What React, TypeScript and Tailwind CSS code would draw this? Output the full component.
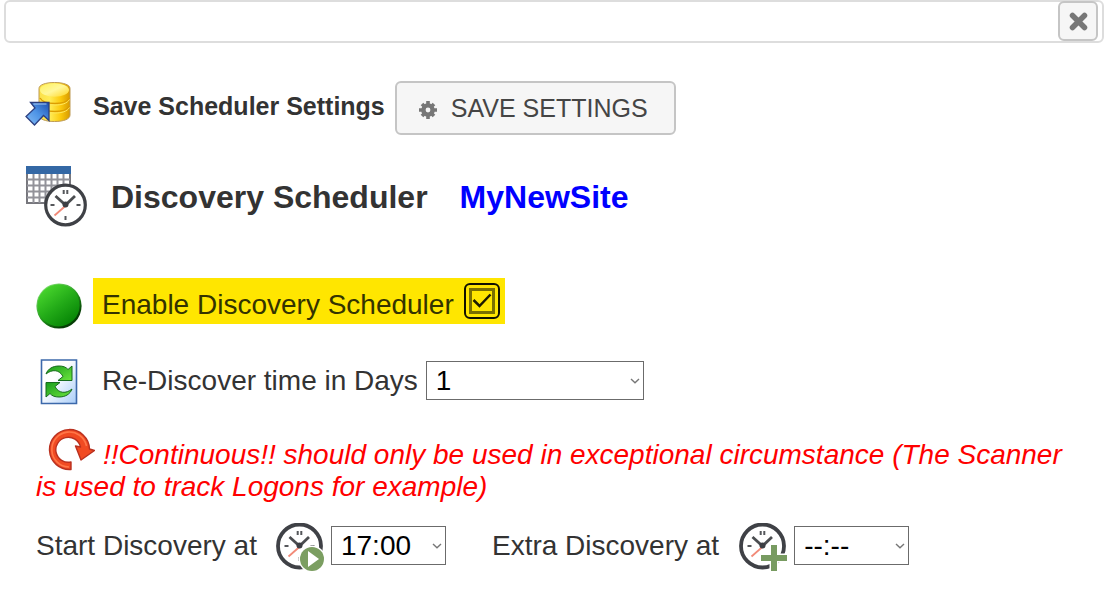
import { useState, type ReactNode } from "react";

function Chevron() {
  return (
    <svg className="pointer-events-none col-start-1 row-start-1 mr-1 self-center justify-self-end" width="10" height="6" viewBox="0 0 10 6" aria-hidden="true">
      <path d="M1 1l4 3.800L9 1" fill="none" stroke="#777" strokeWidth="1.400" />
    </svg>
  );
}

type PickerProps = { id: string; width: string; value: string; options: string[]; onChange: (v: string) => void };

function Picker({ id, width, value, options, onChange }: PickerProps) {
  return (
    <div className={"grid shrink-0 " + width}>
      <select
        id={id}
        value={value}
        onChange={(e) => onChange(e.target.value)}
        className="col-start-1 row-start-1 h-[39px] w-full appearance-none border border-[#6b6b6b] bg-white pl-[9px] leading-8 text-black"
      >
        {options.map((o) => (
          <option key={o}>{o}</option>
        ))}
      </select>
      <Chevron />
    </div>
  );
}

function DatabaseIcon() {
  return (
    <svg className="shrink-0" width="46" height="46" viewBox="0 0 46 46" aria-hidden="true">
      <defs>
        <linearGradient id="gold" x1="0" x2="1">
          <stop offset="0" stopColor="#fbe04a" />
          <stop offset=".35" stopColor="#ffec55" />
          <stop offset=".7" stopColor="#fbc90c" />
          <stop offset="1" stopColor="#d79a00" />
        </linearGradient>
        <linearGradient id="goldTop" x1="0" x2="1" y2="1">
          <stop offset="0" stopColor="#fff25a" />
          <stop offset=".5" stopColor="#fff79a" />
          <stop offset="1" stopColor="#ffd51f" />
        </linearGradient>
        <linearGradient id="blueArrow" x1="0" x2="1" y1="1" y2="0">
          <stop offset="0" stopColor="#86bdf4" />
          <stop offset=".5" stopColor="#4e94e6" />
          <stop offset="1" stopColor="#1d50b0" />
        </linearGradient>
      </defs>
      <path d="M14 7.500C14 4 20 1.500 29.500 1.500S45 4 45 7.500V34c0 4-6 6.500-15.500 6.500S14 38 14 34z" fill="url(#gold)" stroke="#bd9a55" />
      <ellipse cx="29.500" cy="9" rx="14.500" ry="6.800" fill="url(#goldTop)" />
      <path d="M15 17c2 4 8 5.500 15 5.500S42 21 44.500 17M15 25c2 4 8 5.500 15 5.500S42 29 44.500 25" fill="none" stroke="#dc9d00" strokeWidth="1.400" />
      <path d="M15 18.500c2 4 8 5.500 15 5.500s12-1.500 14.500-5.500M15 26.500c2 4 8 5.500 15 5.500s12-1.500 14.500-5.500" fill="none" stroke="#ffe65b" strokeWidth="1" />
      <path d="M5.500 21.500H24v18l-5.500-5L9.500 44 1 35.500l9-8.500z" fill="url(#blueArrow)" stroke="#2c3f80" strokeWidth="1.300" />
      <path d="M8.500 23h13" stroke="#a7cdf5" />
    </svg>
  );
}

function ClockFace({ small = false }: { small?: boolean }) {
  return (
    <g fill="none">
      <circle r={small ? 21.500 : 19.800} fill="#fff" stroke="#3f4146" strokeWidth={small ? 3.800 : 3.200} />
      <path d="M-1.800-15v4M1.800-15v4M-15 0h4M11 0h4M0 11v4" stroke="#55575b" strokeWidth="2" />
      <path d="M1 0L-11 10.500" stroke="#f28a78" strokeWidth="1.800" />
      <path d="M-10-9L0 0l9.500-9" stroke="#4b4d50" strokeWidth="2.800" />
      <circle cy="-.5" r="3" fill="#3c3e43" />
    </g>
  );
}

function CalendarIcon() {
  return (
    <svg className="shrink-0" width="62" height="62" viewBox="0 0 62 62" aria-hidden="true">
      <path d="M2 2h43v36H2z" fill="#fff" stroke="#77777d" strokeWidth="2" />
      <path d="M8.500 9v29M14.500 9v29M20.500 9v29M26.500 9v29M32.500 9v29M38.500 9v29M2 14.500h43M2 20.500h43M2 26.500h43M2 32.500h43" stroke="#929299" strokeWidth="2" />
      <path d="M1 1h45v8H1z" fill="#3468a5" />
      <g transform="translate(40.500 40)"><ClockFace /></g>
    </svg>
  );
}

function GreenDot() {
  return (
    <svg className="mt-[5px] shrink-0" width="46" height="46" viewBox="0 0 46 46" aria-hidden="true">
      <defs>
        <linearGradient id="green" x1=".2" y1=".1" x2=".8" y2=".9">
          <stop offset="0" stopColor="#45d22b" />
          <stop offset=".5" stopColor="#23ab18" />
          <stop offset="1" stopColor="#078606" />
        </linearGradient>
        <linearGradient id="greenRim" x1=".2" y1=".1" x2=".8" y2=".9">
          <stop offset="0" stopColor="#7ad96b" />
          <stop offset=".5" stopColor="#239b1b" />
          <stop offset=".9" stopColor="#063e05" />
        </linearGradient>
      </defs>
      <circle cx="23" cy="23" r="22.600" fill="url(#greenRim)" />
      <circle cx="22.600" cy="22.400" r="21" fill="url(#green)" />
    </svg>
  );
}

function RefreshIcon() {
  return (
    <svg className="shrink-0" width="38" height="46" viewBox="0 0 38 46" aria-hidden="true">
      <defs>
        <linearGradient id="paper" x1="0" y1="0" x2="1" y2="1">
          <stop offset=".4" stopColor="#fff" />
          <stop offset="1" stopColor="#a9cdf8" />
        </linearGradient>
        <linearGradient id="leaf" x1="0" y1="0" x2="1" y2="1">
          <stop offset="0" stopColor="#199c1c" />
          <stop offset="1" stopColor="#6ce53e" />
        </linearGradient>
      </defs>
      <path d="M5.500 1h35v43.500h-35z" transform="translate(-4)" fill="url(#paper)" stroke="#3c69ab" strokeWidth="1.600" />
      <path d="M6 15C8 9.500 13 7 19 7c4 0 7 1 9 3.500L32 7v14.500H18l5-4C19.500 10.500 12 10 6 15z" fill="url(#leaf)" stroke="#176b1d" strokeLinejoin="round" />
      <path d="M32 30c-2 5.500-7 8-13 8-4 0-7-1-9-3.500L6 38V23.500h14l-5 4c3.500 7 11 7.500 17 2.500z" fill="url(#leaf)" stroke="#176b1d" strokeLinejoin="round" />
    </svg>
  );
}

function RepeatIcon() {
  return (
    <svg className="mr-2 ml-3 inline-block align-bottom" width="47" height="44" viewBox="0 0 47 44" aria-hidden="true">
      <path d="M23 42.500V35A12.500 12.500 0 1 1 32.500 20l-5-1 5.500 14 13.500-9.500-5-1.500A20 20 0 1 0 23 42.500z" fill="#f14a22" stroke="#b9301f" strokeWidth="1.400" strokeLinejoin="round" />
      <path d="M21 40A17.500 17.500 0 1 1 38.500 19" fill="none" stroke="#ff7648" strokeWidth="1.600" />
    </svg>
  );
}

function ClockIcon({ badge }: { badge: ReactNode }) {
  return (
    <svg className="mr-[7px] shrink-0" width="48" height="48" viewBox="0 0 48 48" aria-hidden="true">
      <g transform="translate(23.500 23)"><ClockFace small /></g>
      {badge}
    </svg>
  );
}

const playBadge = (
  <g>
    <circle cx="36" cy="36" r="13.500" fill="#fff" />
    <circle cx="36" cy="36" r="12" fill="#7b9e61" />
    <path d="M32 28v16l11-8z" fill="#fff" />
  </g>
);

const plusBadge = (
  <g fill="none">
    <path d="M35 20v28M20 35h28" stroke="#fff" strokeWidth="9" />
    <path d="M35 22v26M22 35h26" stroke="#789b61" strokeWidth="6" />
  </g>
);

export default function App() {
  const [enabled, setEnabled] = useState(true);
  const [days, setDays] = useState("1");
  const [start, setStart] = useState("17:00");
  const [extra, setExtra] = useState("--:--");

  return (
    <main className="bg-white pl-1 font-['Liberation_Sans',Arial,sans-serif] text-[28px] leading-8 text-[#333]">
      <header className="flex h-[43px] justify-end rounded-md border-2 border-[#ddd] pr-1">
        <button type="button" aria-label="Close" className="-mt-px flex size-10 items-center justify-center rounded-md border-2 border-[#c5c5c5] bg-[#f6f6f6]">
          <svg width="20" height="20" viewBox="0 0 20 20" aria-hidden="true">
            <path d="M4.500 4.500l12 12M16.500 4.500l-12 12" stroke="#777" strokeWidth="5.500" strokeLinecap="round" />
          </svg>
        </button>
      </header>

      <section className="mt-[38px] flex pl-[21px] text-[25px]">
        <DatabaseIcon />
        <strong className="mt-[9px] ml-[22px]">Save Scheduler Settings</strong>
        <button type="button" className="ml-[10px] flex h-[54px] items-center rounded-md border-2 border-[#c5c5c5] bg-[#f6f6f6] pr-[26px] pl-[21px] text-[#454545]">
          <svg className="mt-1 mr-[13px]" width="20" height="20" viewBox="0 0 20 20" aria-hidden="true">
            <g stroke="#777" strokeWidth="3.600">
              <path d="M10 1v18M1 10h18M4 4l12 12M16 4L4 16" />
            </g>
            <circle cx="10" cy="10" r="6.800" fill="#777" />
            <circle cx="10" cy="10" r="2.400" fill="#f6f6f6" />
          </svg>
          SAVE SETTINGS
        </button>
      </section>

      <h1 className="mt-[30px] flex items-center pl-[21px] text-[32px] font-bold">
        <CalendarIcon />
        <span className="mt-0.5 ml-6">Discovery Scheduler</span>
        <span className="mt-0.5 ml-8 text-[#00f]">MyNewSite</span>
      </h1>

      <section className="mt-[51px] flex pl-8">
        <GreenDot />
        <div className="ml-[11px] flex h-[46px] items-center bg-[#ffe600] pr-[5px] pl-[9px] text-[#333300]">
          <label htmlFor="enable" className="mt-2">Enable Discovery Scheduler</label>
          <div className="ml-[10px] grid size-9 place-items-center rounded-md border-2 border-[#111100]">
            <input
              id="enable"
              type="checkbox"
              checked={enabled}
              onChange={(e) => setEnabled(e.target.checked)}
              className="col-start-1 row-start-1 size-[26px] appearance-none border-3 border-[#7a6f00]"
            />
            {enabled && (
              <svg className="pointer-events-none col-start-1 row-start-1" width="20" height="16" viewBox="0 0 20 16" aria-hidden="true">
                <path d="M1.500 7l6 6L18.500 1.500" fill="none" stroke="#1c1a00" strokeWidth="2.500" />
              </svg>
            )}
          </div>
        </div>
      </section>

      <section className="mt-[30px] flex pl-9">
        <RefreshIcon />
        <label htmlFor="days" className="mt-[6px] mr-2 ml-6">Re-Discover time in Days</label>
        <div className="mt-0.5">
          <Picker id="days" width="w-[218px]" value={days} options={["1", "2", "3", "7", "14", "Continuous"]} onChange={setDays} />
        </div>
      </section>

      <p className="mt-[22px] pr-8 pl-8 text-[#f00] italic">
        <RepeatIcon />
        !!Continuous!! should only be used in exceptional circumstance (The Scanner is used to track Logons for example)
      </p>

      <section className="mt-5 flex pl-8">
        <label htmlFor="start" className="mt-[7px] mr-[19px]">Start Discovery at</label>
        <ClockIcon badge={playBadge} />
        <div className="mt-[3px]">
          <Picker id="start" width="w-[115px]" value={start} options={["17:00", "18:00", "19:00", "20:00"]} onChange={setStart} />
        </div>
        <label htmlFor="extra" className="mt-[7px] mr-5 ml-[46px]">Extra Discovery at</label>
        <ClockIcon badge={plusBadge} />
        <div className="mt-[3px]">
          <Picker id="extra" width="w-[115px]" value={extra} options={["--:--", "06:00", "12:00", "22:00"]} onChange={setExtra} />
        </div>
      </section>
    </main>
  );
}
